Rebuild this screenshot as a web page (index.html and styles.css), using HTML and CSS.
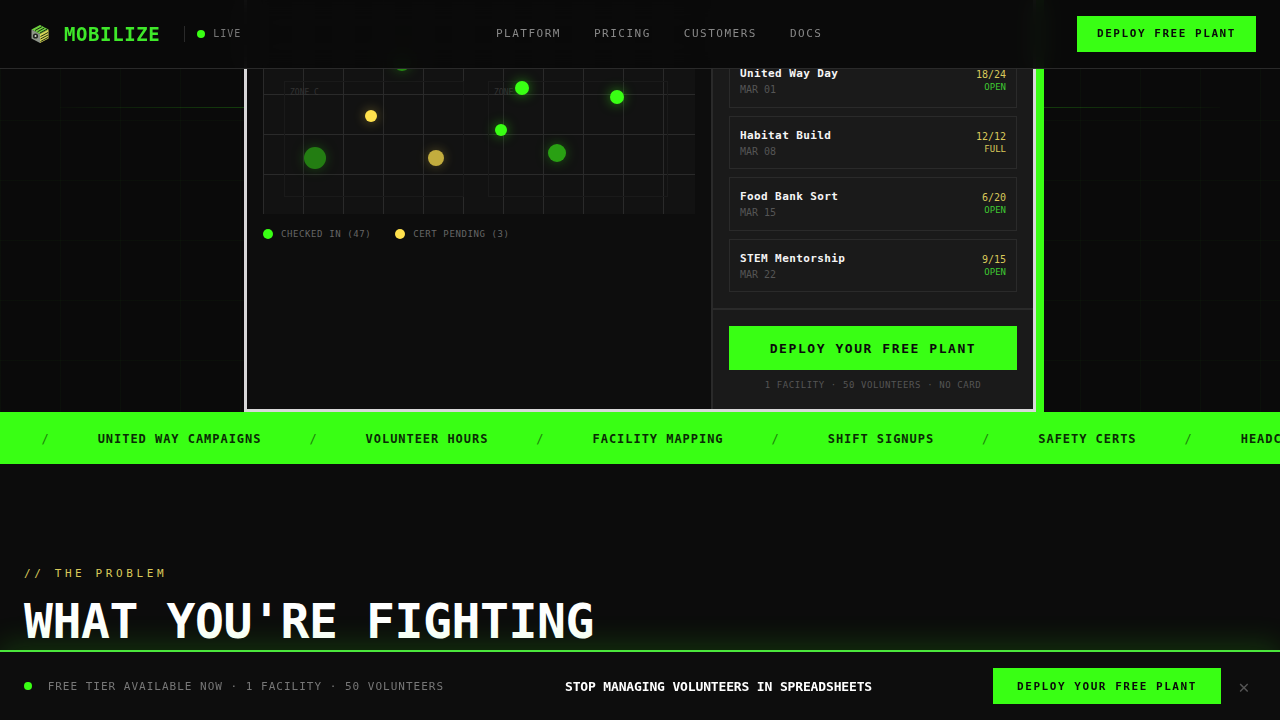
FILE: index.html
```html
<!DOCTYPE html>
<html lang="en">
  <head>
    <meta charset="UTF-8" />
    <meta name="viewport" content="width=device-width, initial-scale=1.0" />
    <title>Mobilize</title>
    <link rel="stylesheet" href="styles.css">
  </head>
  <body>
    <nav class="nav">
      <div class="nav-left">
        <svg class="logo-icon" viewBox="0 0 20 20" width="20" height="20" aria-hidden="true">
          <path d="M10 1 L18.5 5.5 L10 10 L1.5 5.5 Z" fill="#6fd13f" />
          <path d="M5 6.5 L12 2.6 M7.5 7.8 L14.5 3.9 M10 9 L17 5.2" stroke="#1a2a12" stroke-width="1" />
          <path d="M18.5 5.5 L18.5 14.5 L10 19 L10 10 Z" fill="#d9d65a" />
          <path d="M10.5 12.5 L18 8.5 M10.5 15 L18 11 M10.5 17.5 L18 13.5" stroke="#20300f" stroke-width="1" />
          <path d="M1.5 5.5 L10 10 L10 19 L1.5 14.5 Z" fill="#8d9488" />
          <circle cx="5.5" cy="12" r="2.6" fill="#20241e" />
          <circle cx="5.5" cy="12" r="1" fill="#d8dcd2" />
        </svg>
        <span class="logo-text">MOBILIZE</span>
        <span class="live"><i class="live-dot"></i>LIVE</span>
      </div>
      <div class="nav-links">
        <a>PLATFORM</a>
        <a>PRICING</a>
        <a>CUSTOMERS</a>
        <a>DOCS</a>
      </div>
      <a class="btn nav-btn">DEPLOY FREE PLANT</a>
    </nav>

    <header class="hero">
      <div class="hero-line"></div>
      <div class="frame">
        <div class="map-pane">
          <div class="map">
            <div class="zone zone-c"><span>ZONE C</span></div>
            <div class="zone zone-d"><span>ZONE D</span></div>
            <i class="dot green d1"></i>
            <i class="dot green d2"></i>
            <i class="dot yellow d3"></i>
            <i class="dot green d4"></i>
            <i class="dot green d5"></i>
            <i class="dot yellow d6"></i>
            <i class="dot green d7"></i>
            <i class="dot green d8"></i>
          </div>
          <div class="legend">
            <span class="legend-item"><i class="legend-dot green"></i>CHECKED IN (47)</span>
            <span class="legend-item"><i class="legend-dot yellow"></i>CERT PENDING (3)</span>
          </div>
        </div>
        <div class="side-pane">
          <div class="shift-list">
            <div class="shift">
              <div>
                <div class="shift-name">United Way Day</div>
                <div class="shift-date">MAR 01</div>
              </div>
              <div class="shift-meta">
                <div class="shift-count">18/24</div>
                <div class="shift-status">OPEN</div>
              </div>
            </div>
            <div class="shift">
              <div>
                <div class="shift-name">Habitat Build</div>
                <div class="shift-date">MAR 08</div>
              </div>
              <div class="shift-meta">
                <div class="shift-count">12/12</div>
                <div class="shift-status full">FULL</div>
              </div>
            </div>
            <div class="shift">
              <div>
                <div class="shift-name">Food Bank Sort</div>
                <div class="shift-date">MAR 15</div>
              </div>
              <div class="shift-meta">
                <div class="shift-count">6/20</div>
                <div class="shift-status">OPEN</div>
              </div>
            </div>
            <div class="shift">
              <div>
                <div class="shift-name">STEM Mentorship</div>
                <div class="shift-date">MAR 22</div>
              </div>
              <div class="shift-meta">
                <div class="shift-count">9/15</div>
                <div class="shift-status">OPEN</div>
              </div>
            </div>
          </div>
          <div class="side-cta">
            <a class="btn cta-btn">DEPLOY YOUR FREE PLANT</a>
            <p class="cta-note">1 FACILITY · 50 VOLUNTEERS · NO CARD</p>
          </div>
        </div>
      </div>
    </header>

    <div class="ticker">
      <span class="slash">/</span><span>UNITED WAY CAMPAIGNS</span>
      <span class="slash">/</span><span>VOLUNTEER HOURS</span>
      <span class="slash">/</span><span>FACILITY MAPPING</span>
      <span class="slash">/</span><span>SHIFT SIGNUPS</span>
      <span class="slash">/</span><span>SAFETY CERTS</span>
      <span class="slash">/</span><span>HEADCOUNT REPORTS</span>
    </div>

    <section class="problem">
      <div class="section-label">// THE PROBLEM</div>
      <h2 class="section-title">WHAT YOU'RE FIGHTING</h2>
    </section>

    <div class="bottom-bar">
      <div class="bar-left"><i class="live-dot"></i>FREE TIER AVAILABLE NOW · 1 FACILITY · 50 VOLUNTEERS</div>
      <div class="bar-center">STOP MANAGING VOLUNTEERS IN SPREADSHEETS</div>
      <div class="bar-right">
        <a class="btn bar-btn">DEPLOY YOUR FREE PLANT</a>
        <span class="bar-close">✕</span>
      </div>
    </div>
  </body>
</html>
```

FILE: styles.css
```css
* {
  margin: 0;
  padding: 0;
  box-sizing: border-box;
}

html,
body {
  height: 100%;
  overflow: hidden;
}

body {
  font-family: "DejaVu Sans Mono", "Liberation Mono", monospace;
  background: #0c0c0c;
  color: #f5f5f5;
}

i {
  display: block;
}

.btn {
  display: flex;
  align-items: center;
  justify-content: center;
  background: #39ff14;
  color: #0a0a0a;
  font-weight: 700;
  white-space: nowrap;
}

/* Top nav */
.nav {
  position: fixed;
  top: 0;
  left: 0;
  right: 0;
  height: 69px;
  z-index: 20;
  display: flex;
  align-items: center;
  justify-content: space-between;
  padding: 0 24px 1px 30px;
  background: rgba(10, 10, 10, 0.95);
  backdrop-filter: blur(10px);
  border-bottom: 1px solid #2a2a2a;
}

.nav-left {
  display: flex;
  align-items: center;
}

.logo-icon {
  margin-right: 14px;
}

.logo-text {
  font-size: 19px;
  font-weight: 700;
  letter-spacing: 0.6px;
  color: #3fe82a;
}

.live {
  display: flex;
  align-items: center;
  margin-left: 24px;
  padding-left: 12px;
  border-left: 1px solid #2a2a2a;
  height: 16px;
  font-size: 10px;
  letter-spacing: 1px;
  color: #777;
}

.live-dot {
  width: 8px;
  height: 8px;
  border-radius: 50%;
  background: #39ff14;
  margin-right: 8px;
}

.nav-links {
  display: flex;
  gap: 33px;
  font-size: 11px;
  letter-spacing: 1.5px;
  color: #888;
}

.nav-btn {
  width: 179px;
  height: 36px;
  font-size: 11px;
  letter-spacing: 1.55px;
}

/* Hero */
.hero {
  position: relative;
  height: 412px;
  overflow: hidden;
  display: flex;
  justify-content: center;
  align-items: flex-end;
  background-color: #0a0a0a;
  background-image: linear-gradient(90deg, rgba(57, 255, 20, 0.025) 1px, transparent 1px),
    linear-gradient(rgba(57, 255, 20, 0.025) 1px, transparent 1px);
  background-size: 60px 60px;
}

.hero-line {
  position: absolute;
  left: 60px;
  right: 60px;
  top: 107px;
  height: 1px;
  background: linear-gradient(90deg, rgba(57, 255, 20, 0.02), rgba(57, 255, 20, 0.2) 15%, rgba(57, 255, 20, 0.2) 85%, rgba(57, 255, 20, 0.02));
}

.frame {
  position: relative;
  width: 792px;
  height: 440px;
  display: flex;
  background: #0d0d0d;
  border: 3px solid #d8d8d8;
  box-shadow: 8px 8px 0 #39ff14;
}

.map-pane {
  width: 464px;
  padding: 16px 16px 0;
}

.map {
  position: relative;
  height: 223px;
  background-color: #121212;
  background-image: linear-gradient(90deg, #2a2a2a 1px, transparent 1px),
    linear-gradient(#2a2a2a 1px, transparent 1px);
  background-size: 40px 40px;
  background-position: 0 23px;
}

.zone {
  position: absolute;
  top: 90px;
  height: 116px;
  width: 180px;
  border: 1px solid #1a1a1a;
  padding: 6px 5px;
  font-size: 8px;
  color: #333;
}

.zone-c {
  left: 21px;
}

.zone-d {
  left: 225px;
}

.dot {
  position: absolute;
  border-radius: 50%;
}

.dot.green {
  background: #39ff14;
  box-shadow: 0 0 12px rgba(57, 255, 20, 0.5);
}

.dot.yellow {
  background: #ffe14d;
  box-shadow: 0 0 12px rgba(255, 225, 77, 0.4);
}

.d1 { left: 252px; top: 90px; width: 14px; height: 14px; }
.d2 { left: 347px; top: 99px; width: 14px; height: 14px; }
.d3 { left: 102px; top: 119px; width: 12px; height: 12px; }
.d4 { left: 232px; top: 133px; width: 12px; height: 12px; }
.d5 { left: 41px; top: 156px; width: 22px; height: 22px; opacity: 0.45; }
.d6 { left: 165px; top: 159px; width: 16px; height: 16px; opacity: 0.75; }
.d7 { left: 285px; top: 153px; width: 18px; height: 18px; opacity: 0.6; }
.d8 { left: 130px; top: 62px; width: 18px; height: 18px; opacity: 0.5; }

.legend {
  display: flex;
  gap: 24px;
  margin-top: 15px;
  font-size: 9px;
  letter-spacing: 0.6px;
  color: #666;
}

.legend-item {
  display: flex;
  align-items: center;
}

.legend-dot {
  width: 10px;
  height: 10px;
  border-radius: 50%;
  margin-right: 8px;
}

.legend-dot.green {
  background: #39ff14;
}

.legend-dot.yellow {
  background: #ffe14d;
}

.side-pane {
  flex: 1;
  display: flex;
  flex-direction: column;
  justify-content: flex-end;
  background: #1a1a1a;
  border-left: 2px solid #2a2a2a;
}

.shift-list {
  display: flex;
  flex-direction: column;
  gap: 8px;
  padding: 0 16px 16px;
}

.shift {
  display: flex;
  justify-content: space-between;
  align-items: flex-start;
  height: 53.5px;
  padding: 12px 10px 0;
  background: #1a1a1a;
  border: 1px solid #2a2a2a;
}

.shift-name {
  font-size: 11px;
  font-weight: 700;
  letter-spacing: 0.4px;
  color: #f5f5f5;
  margin-bottom: 4px;
}

.shift-date {
  font-size: 10px;
  color: #555;
}

.shift-meta {
  padding-top: 2px;
  text-align: right;
}

.shift-count {
  font-size: 10px;
  color: #d9c95a;
}

.shift-status {
  margin-top: 2px;
  font-size: 9px;
  color: #3fc832;
}

.shift-status.full {
  color: #d9c95a;
}

.side-cta {
  height: 101px;
  padding: 16px 16px 0;
  border-top: 2px solid #2a2a2a;
}

.cta-btn {
  height: 44px;
  font-size: 13px;
  letter-spacing: 1.56px;
}

.cta-note {
  margin-top: 10px;
  text-align: center;
  font-size: 9px;
  letter-spacing: 0.6px;
  color: #555;
}

/* Ticker */
.ticker {
  position: relative;
  height: 52px;
  display: flex;
  align-items: center;
  gap: 48px;
  padding: 1px 0 0 41.5px;
  overflow: hidden;
  white-space: nowrap;
  background: #39ff14;
  color: #0a2a05;
  font-size: 12px;
  font-weight: 700;
  letter-spacing: 0.96px;
}

.slash {
  font-weight: 400;
  opacity: 0.6;
}

/* Problem section */
.problem {
  padding: 103px 24px 0;
}

.section-label {
  font-size: 11px;
  letter-spacing: 3.6px;
  color: #d9c95a;
}

.section-title {
  margin-top: 15px;
  font-size: 48px;
  line-height: 1.1;
  font-weight: 700;
  letter-spacing: -0.4px;
  color: #ffffff;
  white-space: nowrap;
}

/* Sticky bar */
.bottom-bar {
  position: fixed;
  left: 0;
  right: 0;
  bottom: 0;
  height: 70px;
  z-index: 20;
  display: flex;
  align-items: center;
  justify-content: space-between;
  padding: 0 24px;
  background: #0d0d0d;
  border-top: 2px solid #4be63c;
  box-shadow: 0 -6px 30px rgba(57, 255, 20, 0.16);
}

.bar-left {
  display: flex;
  align-items: center;
  width: 420px;
  font-size: 11px;
  letter-spacing: 1px;
  color: #777;
  white-space: nowrap;
}

.bar-left .live-dot {
  margin-right: 16px;
}

.bar-center {
  font-size: 13px;
  font-weight: 700;
  letter-spacing: -0.15px;
  color: #ffffff;
  white-space: nowrap;
}

.bar-right {
  display: flex;
  align-items: center;
  gap: 11px;
}

.bar-btn {
  width: 228px;
  height: 36px;
  font-size: 11px;
  letter-spacing: 1.55px;
}

.bar-close {
  width: 24px;
  text-align: center;
  font-size: 18px;
  color: #555;
}
```
